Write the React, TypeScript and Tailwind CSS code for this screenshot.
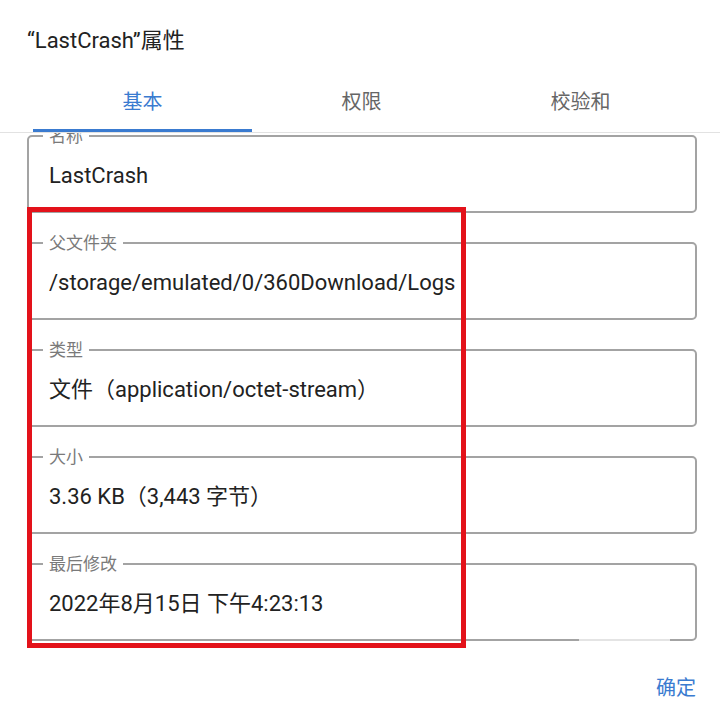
import React from "react";

const fields: { label: string; value: string }[] = [
  { label: "名称", value: "LastCrash" },
  { label: "父文件夹", value: "/storage/emulated/0/360Download/Logs" },
  { label: "类型", value: "文件（application/octet-stream）" },
  { label: "大小", value: "3.36 KB（3,443 字节）" },
  { label: "最后修改", value: "2022年8月15日 下午4:23:13" },
];

function Field({ label, value }: { label: string; value: string }) {
  return (
    <fieldset className="border-2 border-[#a3a3a3] rounded-[5px] px-[20px] pt-[15px] pb-[20px] min-w-0">
      <legend className="ml-[-6px] px-[6px] text-[17px] leading-[20px] text-[#7a7a7a]">{label}</legend>
      <div className="text-[22px] leading-[30px] text-[#222222] whitespace-nowrap">{value}</div>
    </fieldset>
  );
}

export default function App() {
  return (
    <div
      className="relative w-[720px] h-[712px] bg-white overflow-hidden flex flex-col"
      style={{ fontFamily: 'Roboto, "Noto Sans CJK SC", sans-serif' }}
    >
      <div className="pl-[27px] pt-[27px] text-[22px] leading-[28px] text-[#222222]">“LastCrash”属性</div>

      <div className="mt-[18px] border-b border-[#e2e2e2]">
        <div className="ml-[33px] w-[657px] grid grid-cols-3">
          <div className="flex flex-col items-center">
            <div className="h-[56px] flex items-center text-[20px] text-[#3a7bd0] pt-[1px]">基本</div>
            <div className="h-[3px] w-full bg-[#3a7bd0]" />
          </div>
          <div className="flex flex-col items-center">
            <div className="h-[56px] flex items-center text-[20px] text-[#666666] pt-[1px]">权限</div>
            <div className="h-[3px] w-full" />
          </div>
          <div className="flex flex-col items-center">
            <div className="h-[56px] flex items-center text-[20px] text-[#666666] pt-[1px]">校验和</div>
            <div className="h-[3px] w-full" />
          </div>
        </div>
      </div>

      <div className="h-[527px] overflow-hidden pl-[27px] pr-[23px]">
        <div className="mt-[-7px] flex flex-col gap-[20px]">
          {fields.map((f) => (
            <Field key={f.label} label={f.label} value={f.value} />
          ))}
        </div>
      </div>

      <div className="flex justify-end pr-[24px] pt-[14px]">
        <span className="text-[20px] leading-[28px] text-[#3a7bd0]">确定</span>
      </div>

      <div className="absolute left-[27px] top-[207px] w-[439px] h-[441px] border-[5px] border-[#e3121a]" />
      <div className="absolute left-[579px] top-[636px] w-[91px] h-[5px] bg-white/70" />
    </div>
  );
}
